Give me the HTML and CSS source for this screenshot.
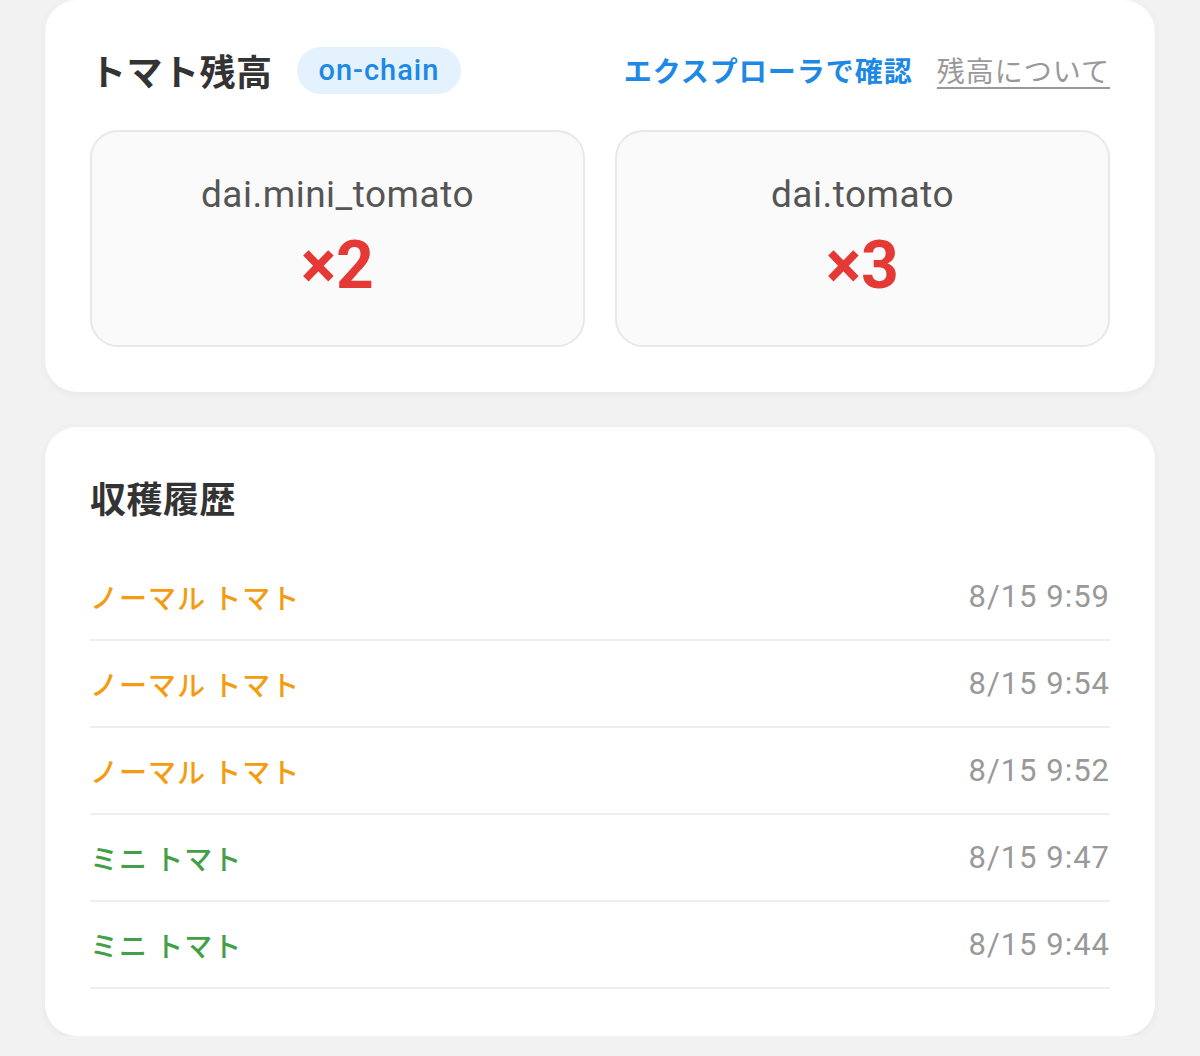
FILE: index.html
```html
<!DOCTYPE html>
<html lang="ja">
<head>
<meta charset="utf-8">
<title>トマト残高</title>
<link rel="stylesheet" href="styles.css">
</head>
<body>
<main class="page">
  <section class="card balance">
    <div class="card-head">
      <div class="title-group">
        <h2 class="card-title">トマト残高</h2>
        <span class="badge">on-chain</span>
      </div>
      <div class="links">
        <a class="link-primary" href="#">エクスプローラで確認</a>
        <a class="link-muted" href="#">残高について</a>
      </div>
    </div>
    <div class="tokens">
      <div class="token">
        <div class="token-name">dai.mini_tomato</div>
        <div class="token-count">×2</div>
      </div>
      <div class="token">
        <div class="token-name">dai.tomato</div>
        <div class="token-count">×3</div>
      </div>
    </div>
  </section>

  <section class="card history">
    <h2 class="card-title">収穫履歴</h2>
    <ul class="history-list">
      <li class="history-row"><span class="kind normal">ノーマル トマト</span><span class="time">8/15 9:59</span></li>
      <li class="history-row"><span class="kind normal">ノーマル トマト</span><span class="time">8/15 9:54</span></li>
      <li class="history-row"><span class="kind normal">ノーマル トマト</span><span class="time">8/15 9:52</span></li>
      <li class="history-row"><span class="kind mini">ミニ トマト</span><span class="time">8/15 9:47</span></li>
      <li class="history-row"><span class="kind mini">ミニ トマト</span><span class="time">8/15 9:44</span></li>
    </ul>
  </section>
</main>
</body>
</html>
```

FILE: styles.css
```css
* { box-sizing: border-box; }

html, body {
  margin: 0;
  padding: 0;
  background: #f2f2f2;
}

body {
  font-family: Roboto, "Noto Sans CJK JP", sans-serif;
  color: #333;
}

.page {
  padding: 0 45px;
  display: flex;
  flex-direction: column;
  gap: 35px;
}

.card {
  background: #ffffff;
  border-radius: 32px;
  padding: 45px;
  box-shadow: 0 2px 8px rgba(0, 0, 0, 0.05);
}

.card-head {
  display: flex;
  align-items: center;
  justify-content: space-between;
  height: 50px;
}

.title-group {
  display: flex;
  align-items: center;
  gap: 24px;
}

.card-title {
  margin: 0;
  font-family: "Noto Sans CJK JP", sans-serif;
  font-size: 36px;
  font-weight: 700;
  line-height: 50px;
  color: #333;
  letter-spacing: 0.5px;
}

.badge {
  display: inline-flex;
  align-items: center;
  height: 47px;
  padding: 0 22px;
  border-radius: 24px;
  background: #e3f2fd;
  color: #1e88e5;
  font-family: Roboto, sans-serif;
  font-size: 29px;
  font-weight: 500;
  letter-spacing: 1px;
}

.links {
  display: flex;
  align-items: center;
  gap: 24px;
  font-family: "Noto Sans CJK JP", sans-serif;
  font-size: 28px;
  letter-spacing: 1px;
}

.link-primary {
  color: #1e88e5;
  font-weight: 700;
  text-decoration: none;
}

.link-muted {
  color: #999;
  text-decoration: underline;
  text-underline-offset: 5px;
  text-decoration-thickness: 2px;
}

.tokens {
  margin-top: 35px;
  display: grid;
  grid-template-columns: 1fr 1fr;
  gap: 30px;
}

.token {
  height: 217px;
  background: #fafafa;
  border: 2px solid #e8e8e8;
  border-radius: 28px;
  display: flex;
  flex-direction: column;
  align-items: center;
  padding-top: 40px;
}

.token-name {
  font-size: 37px;
  line-height: 46px;
  letter-spacing: 0.5px;
  color: #555;
}

.token-count {
  margin-top: 14px;
  font-family: Roboto, sans-serif;
  font-size: 66px;
  line-height: 68px;
  font-weight: 700;
  color: #e53935;
}

.history {
  padding-bottom: 47px;
}

.history-list {
  list-style: none;
  margin: 32px 0 0;
  padding: 0;
}

.history-row {
  display: flex;
  align-items: center;
  justify-content: space-between;
  height: 87px;
  border-bottom: 2px solid #eeeeee;
  font-size: 28px;
}

.kind {
  font-family: "Noto Sans CJK JP", sans-serif;
  font-weight: 500;
  letter-spacing: 1px;
}

.kind.normal { color: #f39c12; }
.kind.mini { color: #43a047; }

.time {
  font-family: Roboto, sans-serif;
  color: #999;
  font-size: 31px;
  letter-spacing: 1px;
}
```
